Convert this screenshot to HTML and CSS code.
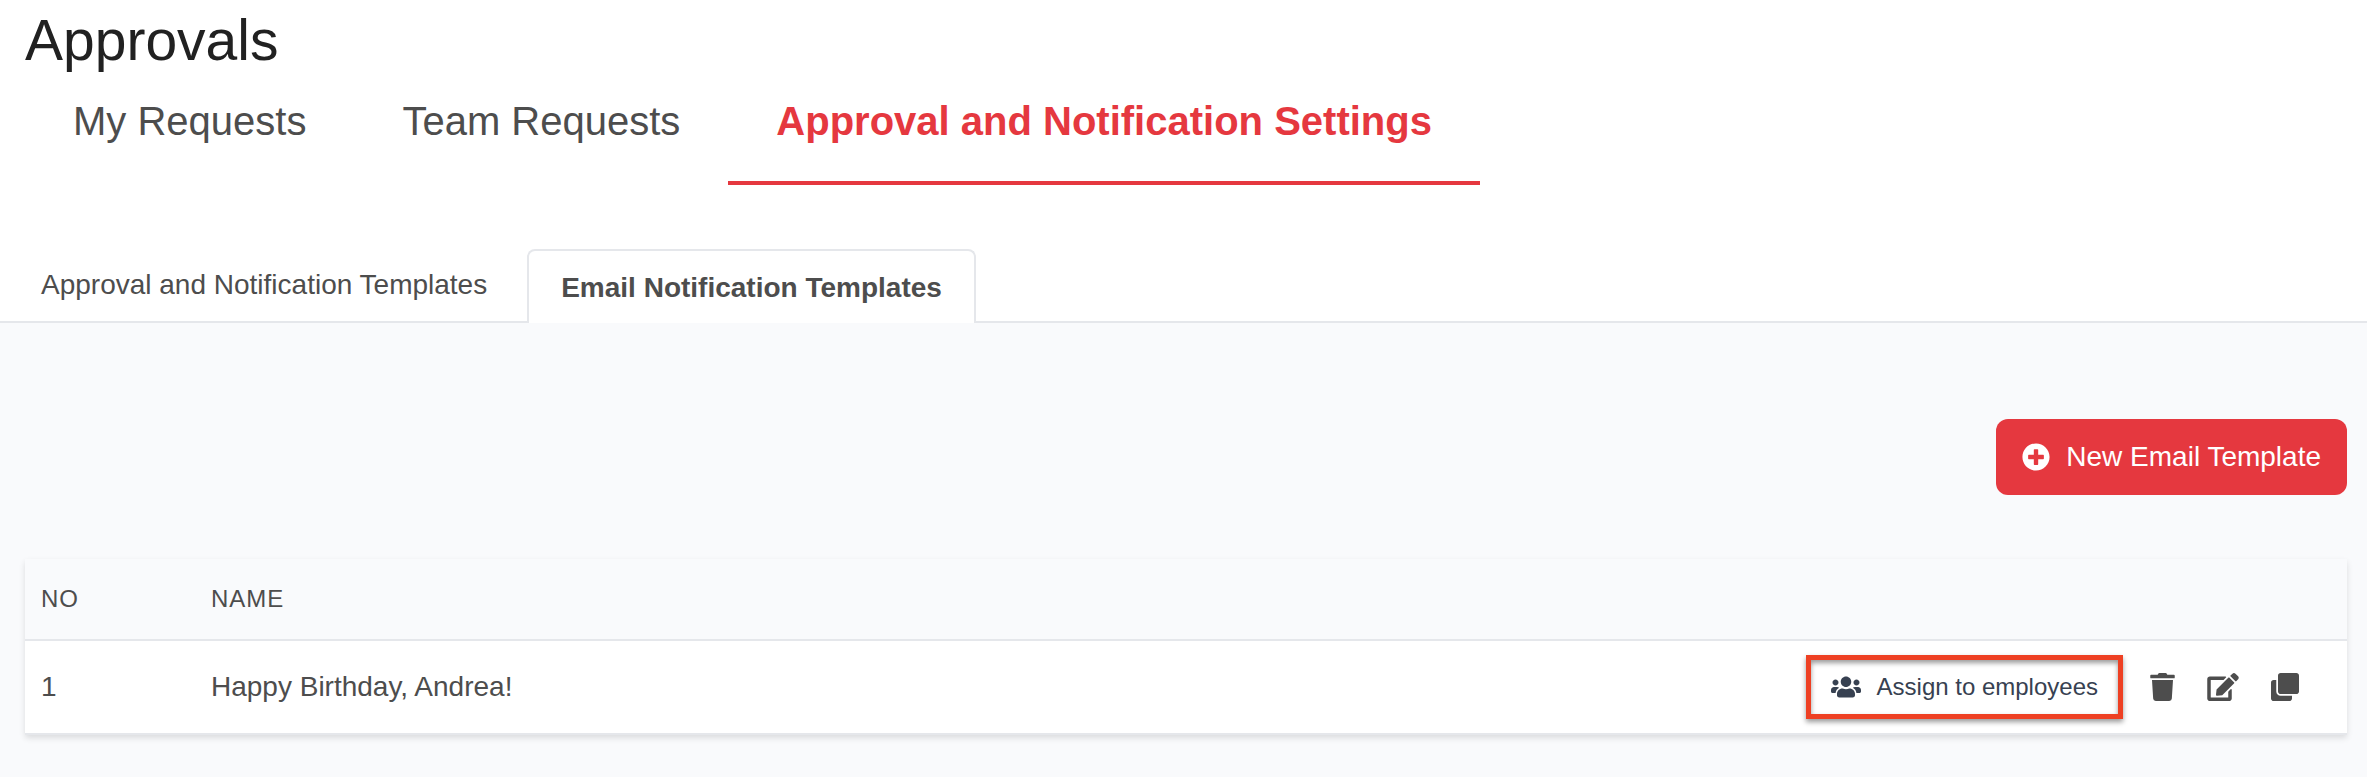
FILE: index.html
```html
<!DOCTYPE html>
<html lang="en">
<head>
    <meta charset="UTF-8">
    <meta name="viewport" content="width=device-width, initial-scale=1.0">
    <title>Approvals</title>
    <link rel="stylesheet" href="styles.css">
</head>
<body>
    <header>
        <h1>Approvals</h1>
        <nav class="main-tabs">
            <a href="#my">My Requests</a>
            <a href="#team">Team Requests</a>
            <a href="#settings" class="active">Approval and Notification Settings</a>
        </nav>
        <nav class="sub-tabs">
            <a href="#approval-templates">Approval and Notification Templates</a>
            <a href="#email-templates" class="active">Email Notification Templates</a>
        </nav>
    </header>

    <main>
        <div class="toolbar">
            <button type="button" class="btn-new">
                <svg width="28" height="28" viewBox="0 0 512 512" fill="currentColor" aria-hidden="true"><path d="M256 8C119 8 8 119 8 256s111 248 248 248 248-111 248-248S393 8 256 8zm144 276c0 6.600-5.400 12-12 12h-92v92c0 6.600-5.400 12-12 12h-56c-6.600 0-12-5.400-12-12v-92h-92c-6.600 0-12-5.400-12-12v-56c0-6.600 5.400-12 12-12h92v-92c0-6.600 5.400-12 12-12h56c6.600 0 12 5.400 12 12v92h92c6.600 0 12 5.400 12 12v56z"/></svg>
                New Email Template
            </button>
        </div>

        <table>
            <thead>
                <tr>
                    <th class="col-no">No</th>
                    <th>Name</th>
                    <th></th>
                </tr>
            </thead>
            <tbody>
                <tr>
                    <td>1</td>
                    <td>Happy Birthday, Andrea!</td>
                    <td>
                        <div class="actions">
                            <button type="button" class="btn-assign">
                                <svg width="30" height="24" viewBox="0 0 640 512" fill="currentColor" aria-hidden="true"><path d="M96 224c35.300 0 64-28.700 64-64s-28.700-64-64-64-64 28.700-64 64 28.700 64 64 64zm448 0c35.300 0 64-28.700 64-64s-28.700-64-64-64-64 28.700-64 64 28.700 64 64 64zm32 32h-64c-17.600 0-33.500 7.100-45.100 18.600 40.300 22.100 68.900 62 75.100 109.400h66c17.700 0 32-14.300 32-32v-32c0-35.300-28.700-64-64-64zm-256 0c61.900 0 112-50.100 112-112S381.900 32 320 32 208 82.100 208 144s50.100 112 112 112zm76.800 32h-8.300c-20.800 10-43.900 16-68.500 16s-47.600-6-68.500-16h-8.300C179.600 288 128 339.600 128 403.200V432c0 26.500 21.500 48 48 48h288c26.500 0 48-21.500 48-48v-28.800c0-63.600-51.600-115.200-115.200-115.200zm-223.700-13.400C161.500 263.100 145.600 256 128 256H64c-35.300 0-64 28.700-64 64v32c0 17.700 14.300 32 32 32h65.900c6.300-47.400 34.900-87.300 75.200-109.400z"/></svg>
                                Assign to employees
                            </button>
                            <button type="button" class="btn-icon" aria-label="Delete">
                                <svg width="25" height="28" viewBox="0 0 448 512" fill="currentColor"><path d="M432 32H312l-9.400-18.700A24 24 0 0 0 281.100 0H166.800a23.720 23.720 0 0 0-21.400 13.300L136 32H16A16 16 0 0 0 0 48v32a16 16 0 0 0 16 16h416a16 16 0 0 0 16-16V48a16 16 0 0 0-16-16zM53.200 467a48 48 0 0 0 47.900 45h245.800a48 48 0 0 0 47.900-45L416 128H32z"/></svg>
                            </button>
                            <button type="button" class="btn-icon" aria-label="Edit">
                                <svg width="32" height="28" viewBox="0 0 576 512" fill="currentColor"><path d="M402.600 83.200l90.200 90.200c3.800 3.800 3.800 10 0 13.800L274.400 405.600l-92.800 10.300c-12.400 1.400-22.900-9.100-21.500-21.500l10.300-92.800L388.800 83.200c3.800-3.800 10-3.800 13.800 0zm162-22.900l-48.800-48.800c-15.200-15.200-39.900-15.200-55.200 0l-35.400 35.400c-3.800 3.800-3.800 10 0 13.800l90.200 90.200c3.800 3.800 10 3.800 13.800 0l35.400-35.400c15.200-15.300 15.200-40 0-55.200zM384 346.200V448H64V128h229.800c3.200 0 6.200-1.300 8.500-3.500l40-40c7.600-7.600 2.200-20.500-8.500-20.500H48C21.500 64 0 85.500 0 112v352c0 26.500 21.500 48 48 48h352c26.500 0 48-21.500 48-48V306.200c0-10.700-12.900-16-20.500-8.500l-40 40c-2.200 2.300-3.500 5.300-3.500 8.500z"/></svg>
                            </button>
                            <button type="button" class="btn-icon" aria-label="Duplicate">
                                <svg width="28" height="28" viewBox="0 0 512 512" fill="currentColor"><path d="M176 0h288c26.500 0 48 21.500 48 48v288c0 26.500-21.500 48-48 48H176c-26.500 0-48-21.500-48-48V48c0-26.500 21.500-48 48-48zM96 128H48c-26.500 0-48 21.500-48 48v288c0 26.500 21.500 48 48 48h288c26.500 0 48-21.500 48-48v-48H176c-44 0-80-36-80-80z"/></svg>
                            </button>
                        </div>
                    </td>
                </tr>
            </tbody>
        </table>
    </main>
</body>
</html>
```
FILE: styles.css
```css
* {
    box-sizing: border-box;
}

body {
    font-family: "Liberation Sans", Arial, sans-serif;
    font-size: 28px;
    line-height: 40px;
    margin: 0;
    min-height: 100vh;
    display: flex;
    flex-direction: column;
    background-color: #ffffff;
    color: #4d4d4d;
}

a {
    color: inherit;
    text-decoration: none;
}

h1 {
    margin: 0;
    padding: 8px 25px;
    font-size: 57px;
    font-weight: 300;
    line-height: 64px;
    color: #212121;
}

/* main tabs */
.main-tabs {
    display: flex;
    padding: 0 25px;
    font-size: 40px;
}

.main-tabs a {
    padding: 21px 48px 40px;
    border-bottom: 4px solid transparent;
}

.main-tabs .active {
    font-weight: bold;
    color: #e5383f;
    border-color: #e5383f;
}

/* sub tabs */
.sub-tabs {
    display: flex;
    margin-top: 64px;
    border-bottom: 2px solid #e5e7eb;
}

.sub-tabs a {
    padding: 16px 40px 16px 41px;
}

.sub-tabs .active {
    padding: 17px 32px 15px;
    margin-bottom: -2px;
    font-weight: bold;
    background-color: #ffffff;
    border: 2px solid #e5e7eb;
    border-bottom: none;
    border-radius: 8px 8px 0 0;
}

main {
    flex: 1;
    padding: 96px 20px 40px 25px;
    background-color: #f9fafc;
}

.toolbar {
    display: flex;
    justify-content: flex-end;
    margin-bottom: 64px;
}

button {
    display: flex;
    align-items: center;
    border: none;
    background: none;
    font-family: inherit;
    color: inherit;
    cursor: pointer;
}

.btn-new {
    gap: 16px;
    padding: 18px 26px;
    border-radius: 12px;
    background-color: #e5383f;
    font-size: 28px;
    line-height: 40px;
    color: #ffffff;
}

/* table */
table {
    width: 100%;
    border-collapse: separate;
    border-spacing: 0;
    background-color: #ffffff;
    box-shadow: 0 3px 6px rgba(0, 0, 0, 0.12);
}

th {
    padding: 20px 16px;
    font-size: 24px;
    font-weight: normal;
    letter-spacing: 1px;
    text-align: left;
    text-transform: uppercase;
    background-color: #f9fafc;
    border-bottom: 2px solid #e5e7eb;
}

td {
    padding: 14px 16px;
    border-bottom: 2px solid #e5e7eb;
}

.col-no {
    width: 170px;
}

.actions {
    display: flex;
    justify-content: flex-end;
    align-items: center;
    padding-right: 24px;
}

.btn-assign {
    gap: 16px;
    margin-right: 19px;
    padding: 7px 20px;
    border: 5px solid #ee4023;
    box-shadow: 0 3px 5px rgba(0, 0, 0, 0.4), inset 0 3px 5px rgba(0, 0, 0, 0.4);
    font-size: 24px;
    line-height: 40px;
    color: #374151;
}

.btn-icon {
    padding: 4px 8px;
    margin-right: 16px;
}

.btn-icon:last-child {
    margin-right: 0;
}
```
